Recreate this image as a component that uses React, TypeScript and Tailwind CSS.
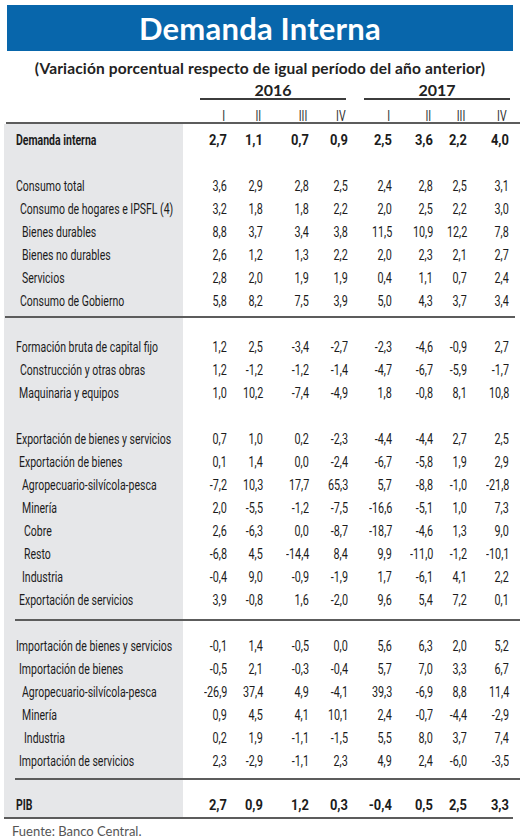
import React from "react";

type Row = {
  label: string;
  indent: string;
  values: string[];
  bold?: boolean;
};

const cols = "grid grid-cols-[183px_44px_36px_46px_39px_44px_41px_34px_42px]";
const narrow = "font-['Roboto',sans-serif]";

const consumo: Row[] = [
  { label: "Consumo total", indent: "pl-[16px]", values: ["3,6", "2,9", "2,8", "2,5", "2,4", "2,8", "2,5", "3,1"] },
  { label: "Consumo de hogares e IPSFL (4)", indent: "pl-[20px]", values: ["3,2", "1,8", "1,8", "2,2", "2,0", "2,5", "2,2", "3,0"] },
  { label: "Bienes durables", indent: "pl-[22px]", values: ["8,8", "3,7", "3,4", "3,8", "11,5", "10,9", "12,2", "7,8"] },
  { label: "Bienes no durables", indent: "pl-[22px]", values: ["2,6", "1,2", "1,3", "2,2", "2,0", "2,3", "2,1", "2,7"] },
  { label: "Servicios", indent: "pl-[22px]", values: ["2,8", "2,0", "1,9", "1,9", "0,4", "1,1", "0,7", "2,4"] },
  { label: "Consumo de Gobierno", indent: "pl-[20px]", values: ["5,8", "8,2", "7,5", "3,9", "5,0", "4,3", "3,7", "3,4"] },
];

const inversion: Row[] = [
  { label: "Formación bruta de capital fijo", indent: "pl-[16px]", values: ["1,2", "2,5", "-3,4", "-2,7", "-2,3", "-4,6", "-0,9", "2,7"] },
  { label: "Construcción y otras obras", indent: "pl-[20px]", values: ["1,2", "-1,2", "-1,2", "-1,4", "-4,7", "-6,7", "-5,9", "-1,7"] },
  { label: "Maquinaria y equipos", indent: "pl-[19px]", values: ["1,0", "10,2", "-7,4", "-4,9", "1,8", "-0,8", "8,1", "10,8"] },
];

const exportaciones: Row[] = [
  { label: "Exportación de bienes y servicios", indent: "pl-[16px]", values: ["0,7", "1,0", "0,2", "-2,3", "-4,4", "-4,4", "2,7", "2,5"] },
  { label: "Exportación de bienes", indent: "pl-[19px]", values: ["0,1", "1,4", "0,0", "-2,4", "-6,7", "-5,8", "1,9", "2,9"] },
  { label: "Agropecuario-silvícola-pesca", indent: "pl-[22px]", values: ["-7,2", "10,3", "17,7", "65,3", "5,7", "-8,8", "-1,0", "-21,8"] },
  { label: "Minería", indent: "pl-[22px]", values: ["2,0", "-5,5", "-1,2", "-7,5", "-16,6", "-5,1", "1,0", "7,3"] },
  { label: "Cobre", indent: "pl-[24px]", values: ["2,6", "-6,3", "0,0", "-8,7", "-18,7", "-4,6", "1,3", "9,0"] },
  { label: "Resto", indent: "pl-[24px]", values: ["-6,8", "4,5", "-14,4", "8,4", "9,9", "-11,0", "-1,2", "-10,1"] },
  { label: "Industria", indent: "pl-[22px]", values: ["-0,4", "9,0", "-0,9", "-1,9", "1,7", "-6,1", "4,1", "2,2"] },
  { label: "Exportación de servicios", indent: "pl-[19px]", values: ["3,9", "-0,8", "1,6", "-2,0", "9,6", "5,4", "7,2", "0,1"] },
];

const importaciones: Row[] = [
  { label: "Importación de bienes y servicios", indent: "pl-[16px]", values: ["-0,1", "1,4", "-0,5", "0,0", "5,6", "6,3", "2,0", "5,2"] },
  { label: "Importación de bienes", indent: "pl-[19px]", values: ["-0,5", "2,1", "-0,3", "-0,4", "5,7", "7,0", "3,3", "6,7"] },
  { label: "Agropecuario-silvícola-pesca", indent: "pl-[22px]", values: ["-26,9", "37,4", "4,9", "-4,1", "39,3", "-6,9", "8,8", "11,4"] },
  { label: "Minería", indent: "pl-[22px]", values: ["0,9", "4,5", "4,1", "10,1", "2,4", "-0,7", "-4,4", "-2,9"] },
  { label: "Industria", indent: "pl-[24px]", values: ["0,2", "1,9", "-1,1", "-1,5", "5,5", "8,0", "3,7", "7,4"] },
  { label: "Importación de servicios", indent: "pl-[19px]", values: ["2,3", "-2,9", "-1,1", "2,3", "4,9", "2,4", "-6,0", "-3,5"] },
];

const TableRow: React.FC<{ row: Row }> = ({ row }) => (
  <div className={`${cols} h-[23px] pt-[2px] items-center text-[15px] leading-[21px] ${row.bold ? "font-bold" : ""}`}>
    <div className={`${row.indent} whitespace-nowrap`}>
      <span className="inline-block origin-left scale-x-[0.7]">{row.label}</span>
    </div>
    {row.values.map((v, i) => (
      <div key={i} className="text-right whitespace-nowrap">
        <span className={`inline-block origin-right ${row.bold ? "scale-x-[0.86]" : "scale-x-[0.72]"}`}>{v}</span>
      </div>
    ))}
  </div>
);

const Blank = () => <div className="h-[23px]" />;

const App: React.FC = () => {
  const numerals = ["I", "II", "III", "IV", "I", "II", "III", "IV"];

  return (
    <div className="w-[520px] h-[840px] bg-white text-[#1c1c1c] overflow-hidden">
      <div className="mx-[7px] mt-[5px] h-[46px] bg-[#0866ab] flex items-center justify-center">
        <h1 className="text-white font-['Lato',sans-serif] font-bold text-[31px] leading-none tracking-[0.2px]">
          Demanda Interna
        </h1>
      </div>

      <p className="mt-[7px] text-center font-['Lato',sans-serif] font-bold text-[15.5px] leading-[20px] tracking-[0.15px] text-[#222]">
        (Variación porcentual respecto de igual período del año anterior)
      </p>

      <div className="flex mt-[3px] font-['Lato',sans-serif] font-bold text-[16px] text-[#222]">
        <div className="w-[200px]" />
        <div className="w-[146px] h-[19px] leading-[17px] text-center border-b-2 border-[#3c3c3c]">2016</div>
        <div className="w-[18px]" />
        <div className="w-[146px] h-[19px] leading-[17px] text-center border-b-2 border-[#3c3c3c]">2017</div>
      </div>

      <div className={`${cols} ${narrow} h-[22px] items-end text-[15px] leading-[12px] text-[#333]`}>
        <div />
        {numerals.map((n, i) => (
          <div key={i} className="text-right pr-[2px]">
            <span className="inline-block origin-right scale-x-[0.7]">{n}</span>
          </div>
        ))}
      </div>

      <div className="ml-[6px] w-[514px] h-[2px] bg-[#5c5c5c]" />

      <div
        className={`${narrow} bg-[linear-gradient(to_right,transparent_4px,#e6e7e9_4px,#e6e7e9_183px,transparent_183px)]`}
      >
        <div className="h-[4px]" />
        <TableRow
          row={{
            label: "Demanda interna",
            indent: "pl-[16px]",
            bold: true,
            values: ["2,7", "1,1", "0,7", "0,9", "2,5", "3,6", "2,2", "4,0"],
          }}
        />
        <Blank />
        {consumo.map((r) => (
          <TableRow key={r.label} row={r} />
        ))}

        <div className="mt-[4px] ml-[5px] w-[510px] h-[2px] bg-[#5c5c5c]" />
        <div className="h-[17px]" />
        {inversion.map((r) => (
          <TableRow key={r.label} row={r} />
        ))}
        <Blank />
        {exportaciones.map((r, i) => (
          <TableRow key={i} row={r} />
        ))}

        <div className="mt-[8px] ml-[15px] w-[505px] h-[2px] bg-[#5c5c5c]" />
        <div className="h-[13px]" />
        {importaciones.map((r, i) => (
          <TableRow key={i} row={r} />
        ))}

        <div className="mt-[6px] ml-[15px] w-[505px] h-[2px] bg-[#5c5c5c]" />
        <div className="h-[13px]" />
        <TableRow
          row={{
            label: "PIB",
            indent: "pl-[16px]",
            bold: true,
            values: ["2,7", "0,9", "1,2", "0,3", "-0,4", "0,5", "2,5", "3,3"],
          }}
        />
        <div className="h-[1px]" />
      </div>
      <div className="ml-[4px] w-[509px] h-[2px] bg-[#5c5c5c]" />

      <p className="mt-[6px] pl-[12px] font-['Lato',sans-serif] text-[13px] leading-[13px] text-[#555]">
        Fuente: Banco Central.
      </p>
    </div>
  );
};

export default App;
